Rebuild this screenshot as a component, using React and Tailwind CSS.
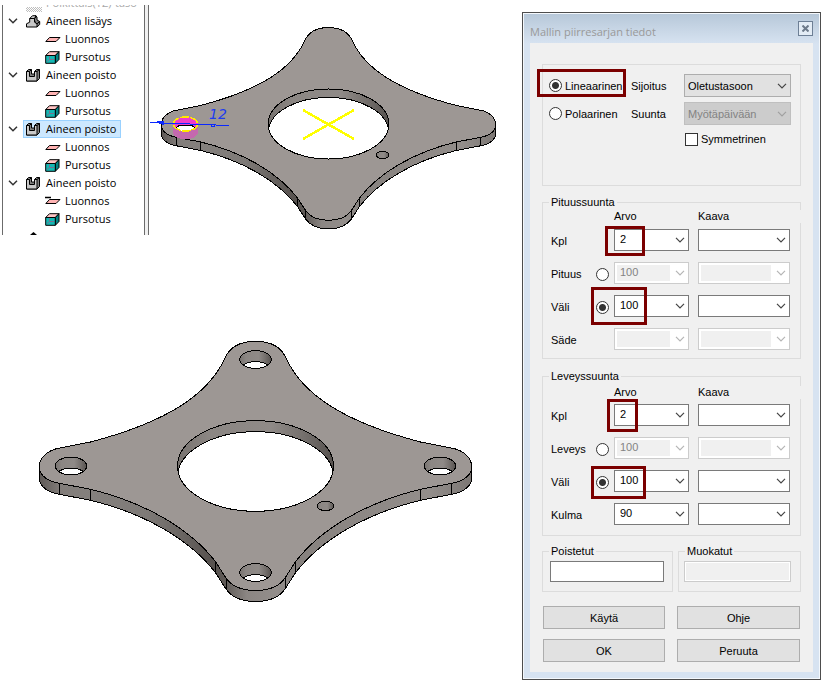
import React, { useState } from "react";

/* ---------- plate drawing ---------- */

// Left half of the upper outline, from the back lobe to the left tip.
const BACK_LEFT =
  "C-16 -124.7 -26 -119 -31 -107 C-47 -73 -85 -45 -165 -24 L-195.5 -18 C-208 -16 -216.3 -8 -216.3 1";
const BACK_RIGHT =
  "C216.3 -8 208 -16 195.5 -18 L165 -24 C85 -45 47 -73 31 -107 C26 -119 16 -124.7 0 -124.7";
const FRONT =
  "C-216.3 9 -208 15.5 -196 17.3 L-165 23.3 C-112 36 -66 62 -40 95.7 L-29.5 112 C-24 120 -16 124.5 0 124.5 C16 124.5 24 120 29.5 112 L40 95.7 C66 62 112 36 165 23.3 L196 17.3 C208 15.5 216.3 9 216.3 1";
const FRONT_LOWER =
  "L216.3 12 C216.3 20 208 26.5 196 28.3 L165 34.3 C112 47 66 73 40 106.7 L29.5 123 C24 131 16 135.5 0 135.5 C-16 135.5 -24 131 -29.5 123 L-40 106.7 C-66 73 -112 47 -165 34.3 L-196 28.3 C-208 26.5 -216.3 20 -216.3 12 Z";

const EDGES = [
  [196, 17.3],
  [165, 23.3],
  [40, 95.7],
  [29.5, 112],
];

function Hole({ id, cx, cy, rx, ry, depth = 11 }) {
  return (
    <g>
      <clipPath id={id}>
        <ellipse cx={cx} cy={cy} rx={rx} ry={ry} />
      </clipPath>
      <linearGradient id={`${id}-wall`}>
        <stop offset="0" stopColor="#77726f" />
        <stop offset="0.2" stopColor="#8b8683" />
        <stop offset="0.6" stopColor="#8f8a87" />
        <stop offset="0.8" stopColor="#76716e" />
        <stop offset="1" stopColor="#57524f" />
      </linearGradient>
      <ellipse cx={cx} cy={cy} rx={rx} ry={ry} fill={`url(#${id}-wall)`} />
      <g clipPath={`url(#${id})`}>
        <ellipse cx={cx} cy={cy + depth} rx={rx} ry={ry} fill="#fff" stroke="#000" vectorEffect="non-scaling-stroke" />
      </g>
      <ellipse cx={cx} cy={cy} rx={rx} ry={ry} fill="none" stroke="#000" vectorEffect="non-scaling-stroke" />
    </g>
  );
}

function Plate({ id, transform, holes }) {
  return (
    <g transform={transform} shapeRendering="crispEdges">
      <linearGradient id={`${id}-side`}>
        <stop offset="0" stopColor="#5d5855" />
        <stop offset="0.05" stopColor="#827d7a" />
        <stop offset="0.12" stopColor="#84807d" />
        <stop offset="0.25" stopColor="#7e7a77" />
        <stop offset="0.4" stopColor="#57524f" />
        <stop offset="0.43" stopColor="#5f5a57" />
        <stop offset="0.48" stopColor="#8b8683" />
        <stop offset="0.55" stopColor="#938e8b" />
        <stop offset="0.6" stopColor="#86817e" />
        <stop offset="0.9" stopColor="#938e8b" />
        <stop offset="1" stopColor="#7c7774" />
      </linearGradient>
      <path d={`M-216.3 1 ${FRONT} ${FRONT_LOWER}`} fill={`url(#${id}-side)`} stroke="#000" vectorEffect="non-scaling-stroke" />
      {EDGES.map(([x, y]) => (
        <path key={x} d={`M${-x} ${y} v11 M${x} ${y} v11`} stroke="#000" vectorEffect="non-scaling-stroke" />
      ))}
      <path d={`M0 -124.7 ${BACK_LEFT} ${FRONT} ${BACK_RIGHT} Z`} fill="#9d9794" stroke="#000" vectorEffect="non-scaling-stroke" />
      <Hole id={`${id}-bore`} cx={0} cy={0} rx={78} ry={45.3} />
      <Hole id={`${id}-pin`} cx={70} cy={40} rx={8.3} ry={4.7} />
      {holes.map(([x, y], i) => (
        <Hole key={i} id={`${id}-h${i}`} cx={x} cy={y} rx={15.7} ry={9} />
      ))}
    </g>
  );
}

function SelectedHolePlate() {
  return (
    <svg width="352" height="230" viewBox="150 5 352 230" role="img" aria-label="Levy, yksi reikä" className="shrink-0">
      <Plate id="p1" transform="translate(328.5 124) scale(0.7735)" holes={[]} />
      <g shapeRendering="crispEdges">
        <path d="M173 124 V132 A12.5 7.5 0 0 0 198 132 V124 Z" fill="#c468ae" />
        <ellipse cx="185.5" cy="124" rx="12.5" ry="7.5" fill="#f03ccc" />
        <ellipse cx="185.5" cy="128" rx="9" ry="3" fill="#fff" />
        <path d="M176.5 128 A9 3 0 0 1 194.5 128" fill="none" stroke="#000" />
        <ellipse cx="185.5" cy="124" rx="12" ry="7" fill="none" stroke="#ffe900" strokeWidth="1.5" strokeDasharray="9 1" />
        <path d="M150 122.5 L229 125.5" stroke="#0a28ff" strokeWidth="1" />
        <path d="M157 122 L163 121.5 L163 124.5 Z" fill="#0a28ff" stroke="#0a28ff" />
        <path d="M211 124.5 h3 v2 h-3z" fill="none" stroke="#0a28ff" />
        <path d="M303 110 L354 139 M303 139 L354 110" stroke="#ffff00" strokeWidth="2.5" />
      </g>
      <text x="209" y="119" fill="#1c3cf0" fontSize="14" fontStyle="italic" fontFamily="DejaVu Sans, sans-serif">
        12
      </text>
    </svg>
  );
}

function FinishedPlate() {
  return (
    <svg width="436" height="264" viewBox="38 340 436 264" role="img" aria-label="Levy, neljä reikää">
      <Plate
        id="p2"
        transform="translate(255.5 466)"
        holes={[
          [0, -106.5],
          [-184.5, 0],
          [184.5, 0],
          [0, 106.5],
        ]}
      />
    </svg>
  );
}

/* ---------- feature tree ---------- */

function AddIcon() {
  return (
    <svg width="15" height="13" viewBox="0 0 15 13" stroke="#000" strokeLinejoin="round">
      <path d="M7.5 2.5 L9.5 .7 L11 2 V5 L13.7 6.5 V9.5 L11 12 Z" fill="#808080" />
      <path d="M.5 12 V8.8 L3.7 7.2 V3.5 L6.5 .7 H10 L8.5 3.5 V7.2 L11 8.8 V12 Z" fill="#c8c8c8" />
      <path d="M3.7 3.5 H8.5 L11 1.2 M11 8.8 L13.7 6.5" fill="none" />
    </svg>
  );
}

function CutIcon() {
  return (
    <svg width="15" height="13" viewBox="0 0 15 13" stroke="#000" strokeLinejoin="round">
      <path d="M.5 2.5 L2.5 .5 H5.5 V5 L8.5 5 V2.5 L10.5 .5 H13.5 V9.5 L11 12 H.5 Z" fill="#808080" />
      <path d="M.5 12 V2.5 H3.5 V7.5 H8.5 V2.5 H11 V12 Z" fill="#c8c8c8" />
      <path d="M3.5 2.5 L5.5 .5 M11 2.5 L13.5 .5" fill="none" />
    </svg>
  );
}

function SketchIcon({ marked }) {
  return (
    <svg width="16" height="13" viewBox="0 0 16 13">
      <path d="M4.5 4.5 H15 L11 8.5 H.8 Z" fill="#ffb3b3" stroke="#000" />
      {marked && <path d="M0 2.5 h6" stroke="#000" strokeWidth="1.5" />}
    </svg>
  );
}

function ExtrudeIcon() {
  return (
    <svg width="16" height="13" viewBox="0 0 16 13" strokeLinejoin="round">
      <path d="M.7 4.5 L4.5 .7 H14 L10.3 4.5 Z" fill="#ffc4c4" stroke="#000" />
      <path d="M10.3 4.5 L14 .7 V8.5 L10.3 12.3 Z" fill="#008585" stroke="#000" />
      <path d="M.7 4.5 H10.3 V12.3 H.7 Z" fill="#14b8b4" stroke="#000" />
      <path d="M2 10.5 L4.5 8.5 H9 M4.5 5.5 V8" stroke="#7a6f8c" fill="none" />
    </svg>
  );
}

function Chevron({ className = "" }) {
  return (
    <svg width="10" height="6" viewBox="0 0 10 6" fill="none" stroke="currentColor" strokeWidth="1.2" className={className} aria-hidden="true">
      <path d="M1 .8 L5 4.8 L9 .8" />
    </svg>
  );
}

const FEATURES = [
  { name: "Aineen lisäys", icon: AddIcon },
  { name: "Aineen poisto", icon: CutIcon },
  { name: "Aineen poisto", icon: CutIcon, selected: true },
  { name: "Aineen poisto", icon: CutIcon, marked: true },
];

function FeatureTree() {
  return (
    <nav
      aria-label="Piirrepuu"
      className="ml-[2px] flex h-[230px] w-[147px] shrink-0 border-l border-r border-l-[#6b6b6b] border-r-[#6b6b6b] bg-[#f0f0f0] font-['Open_Sans',sans-serif] text-[11px] text-black"
    >
      <ul className="mr-[3px] flex flex-1 flex-col overflow-hidden border-r border-[#6b6b6b] bg-white whitespace-nowrap">
        <li className="flex h-[7px] shrink-0 items-end overflow-hidden pl-[23px]">
          <span className="mr-1 h-[5px] w-4 shrink-0 bg-[repeating-conic-gradient(#bdbdbd_0_25%,#fff_0_50%)] bg-[length:2px_2px]" />
          <span className="h-[18px] leading-[18px] text-[#a8a8a8]">Poikittais(YZ)-taso</span>
        </li>
        {FEATURES.map(({ name, icon: Icon, selected, marked }, i) => (
          <li key={i}>
            <div className="flex h-[18px] items-center pl-[5px]">
              <Chevron className="mr-[5px] text-[#333] [stroke-width:1.5]" />
              <span
                className={
                  selected
                    ? "flex h-[18px] items-center gap-[5px] border border-[#99d1ff] bg-[#cce8ff] pl-[2px] pr-1 leading-[16px]"
                    : "flex h-[18px] items-center gap-[5px] border border-transparent pl-[2px] pr-1 leading-[16px]"
                }
              >
                <Icon />
                {name}
              </span>
            </div>
            <ul className="pl-[42px]">
              <li className="flex h-[18px] items-center gap-1">
                <SketchIcon marked={marked} />
                Luonnos
              </li>
              <li className="flex h-[18px] items-center gap-1">
                <ExtrudeIcon />
                Pursotus
              </li>
            </ul>
          </li>
        ))}
        <li className="flex flex-1 items-end pl-[27px]">
          <svg width="7" height="3" viewBox="0 0 7 3">
            <path d="M0 3 L3.5 0 L7 3 Z" />
          </svg>
        </li>
      </ul>
    </nav>
  );
}

/* ---------- dialog ---------- */

function Mark({ className }) {
  return <span aria-hidden="true" className={`pointer-events-none absolute border-[3px] border-[#7b0000] ${className}`} />;
}

function Radio({ id, ...rest }) {
  return (
    <input
      type="radio"
      id={id}
      className="size-[13px] shrink-0 appearance-none rounded-full border border-[#333] bg-white checked:bg-[radial-gradient(circle,#333_0_3px,#fff_4px)]"
      {...rest}
    />
  );
}

function Combo({ id, label, value = "", disabled }) {
  return (
    <div className={disabled ? "flex h-[22px] min-w-0 border border-[#ccc] bg-white" : "flex h-[22px] min-w-0 border border-[#7a7a7a] bg-white"}>
      <input
        id={id}
        aria-label={label}
        defaultValue={value}
        disabled={disabled}
        className="my-[2px] ml-[2px] h-[16px] w-0 min-w-0 flex-1 px-[3px] pb-[2px] leading-[14px] outline-none disabled:bg-[#f0f0f0] disabled:text-[#838383]"
      />
      <button
        type="button"
        aria-label={`${label}: valitse`}
        disabled={disabled}
        className="flex w-[18px] shrink-0 items-center justify-end pr-[3px] text-[#444] disabled:text-[#b5b5b5]"
      >
        <Chevron />
      </button>
    </div>
  );
}

function Group({ title, className = "", children }) {
  return (
    <fieldset className={`min-w-0 border border-[#dcdcdc] ${className}`}>
      <legend className="ml-[6px] px-[2px] leading-[16px]">{title}</legend>
      {children}
    </fieldset>
  );
}

const GRID = "relative grid grid-cols-[45px_18px_75px_minmax(0,1fr)] items-center";

function DirectionGroup({ name, title, className, bodyClass, rows }) {
  const [mode, setMode] = useState("vali");
  return (
    <Group title={title} className={className}>
      <div className={`flex flex-col pl-2 pr-[10px] ${bodyClass}`}>
        <div className="grid grid-cols-[63px_75px_minmax(0,1fr)] leading-[13px]">
          <span className="col-start-2">Arvo</span>
          <span className="-mr-[11px] ml-[9px] bg-[#f0f0f0]">Kaava</span>
        </div>
        <div className="flex flex-col gap-[11px]">
          {rows.map((r) => (
            <div key={r.label} className={GRID}>
              <label htmlFor={`${name}-${r.label}`} className="pt-[2px]">
                {r.label}
              </label>
              <span className="flex pt-[2px]">
                {r.mode && (
                  <Radio
                    name={name}
                    aria-label={`${title}: ${r.label}`}
                    checked={mode === r.mode}
                    onChange={() => setMode(r.mode)}
                  />
                )}
              </span>
              <Combo id={`${name}-${r.label}`} label={`${r.label}, arvo`} value={r.value} disabled={r.disabled} />
              <div className="ml-[9px] min-w-0">
                <Combo label={`${r.label}, kaava`} disabled={r.disabled} />
              </div>
              {r.mark && <Mark className={r.mark} />}
            </div>
          ))}
        </div>
      </div>
    </Group>
  );
}

function Select({ id, disabled, children }) {
  return (
    <span className="relative flex">
      <select
        id={id}
        disabled={disabled}
        className="h-[23px] w-full appearance-none border border-[#adadad] bg-[#e1e1e1] pl-[3px] pr-5 text-black disabled:border-[#bfbfbf] disabled:bg-[#ccc] disabled:text-[#838383] disabled:opacity-100"
      >
        {children}
      </select>
      <Chevron
        className={
          disabled
            ? "pointer-events-none absolute right-[4px] top-[9px] text-[#a0a0a0]"
            : "pointer-events-none absolute right-[4px] top-[9px] text-[#444]"
        }
      />
    </span>
  );
}

function PushButton({ children }) {
  return (
    <button type="button" className="h-[23px] border border-[#adadad] bg-[#e1e1e1] text-center">
      {children}
    </button>
  );
}

function PatternDialog() {
  const [shape, setShape] = useState("lin");
  return (
    <section
      role="dialog"
      aria-label="Mallin piirresarjan tiedot"
      className="mr-px mt-3 w-[299px] shrink-0 border border-[#4d4d4d] bg-[#f4f8fc] p-px"
    >
      <div className="bg-[#d7e3f1] bg-[linear-gradient(#b7c8d9,#d7e3f1_30px)] px-[6px] pb-[6px]">
        <header className="flex h-[29px] items-center justify-between pt-1">
          <h1 className="pt-[3px] font-['Open_Sans',sans-serif] text-[11px] leading-[16px] text-[#999]">Mallin piirresarjan tiedot</h1>
          <button
            type="button"
            aria-label="Sulje"
            className="mb-[5px] flex size-[15px] items-center justify-center border border-[#6d7f95] bg-[#e3ecf5] text-[#6d7a8a]"
          >
            <svg width="7" height="7" viewBox="0 0 7 7" stroke="currentColor" strokeWidth="2">
              <path d="M.5 .5 L6.5 6.5 M6.5 .5 L.5 6.5" />
            </svg>
          </button>
        </header>

        <form
          onSubmit={(e) => e.preventDefault()}
          className="bg-[#f0f0f0] px-3 pb-[10px] pt-[21px] font-['Liberation_Sans',Arial,sans-serif] text-[11px] leading-[14px] text-black"
        >
          <div className="relative h-[122px] border border-[#dcdcdc] pl-[6px] pr-[9px] pt-[9px]">
            <div className="grid grid-cols-[82px_53px_minmax(0,1fr)] items-center gap-y-[5px]">
              <label className="flex items-center gap-[3px]">
                <Radio name="muoto" checked={shape === "lin"} onChange={() => setShape("lin")} />
                Lineaarinen
              </label>
              <label htmlFor="sijoitus">Sijoitus</label>
              <Select id="sijoitus">
                <option>Oletustasoon</option>
              </Select>
              <label className="flex items-center gap-[3px]">
                <Radio name="muoto" checked={shape === "pol"} onChange={() => setShape("pol")} />
                Polaarinen
              </label>
              <label htmlFor="suunta">Suunta</label>
              <Select id="suunta" disabled>
                <option>Myötäpäivään</option>
              </Select>
              <label className="col-start-3 flex items-center gap-[3px] pl-px pt-[2px]">
                <input type="checkbox" className="size-[13px] appearance-none border border-[#333] bg-white checked:bg-[#333]" />
                Symmetrinen
              </label>
            </div>
            <Mark className="-left-[6px] top-1 h-[28px] w-[89px]" />
          </div>

          <DirectionGroup
            name="pituus"
            title="Pituussuunta"
            className="mt-2"
            bodyClass="gap-[6px] pb-2"
            rows={[
              { label: "Kpl", value: "2", mark: "-top-[3px] left-[54px] h-[30px] w-[40px]" },
              { label: "Pituus", value: "100", mode: "koko", disabled: true },
              { label: "Väli", value: "100", mode: "vali", mark: "-top-2 left-[40px] h-[38px] w-[56px]" },
              { label: "Säde", disabled: true },
            ]}
          />
          <DirectionGroup
            name="leveys"
            title="Leveyssuunta"
            className="mt-[9px]"
            bodyClass="gap-[5px] pt-[2px] pb-[10px]"
            rows={[
              { label: "Kpl", value: "2", mark: "-top-[5px] left-[56px] h-[33px] w-[31px]" },
              { label: "Leveys", value: "100", mode: "koko", disabled: true },
              { label: "Väli", value: "100", mode: "vali", mark: "-top-1 left-[40px] h-[33px] w-[55px]" },
              { label: "Kulma", value: "90" },
            ]}
          />

          <div className="mt-[7px] grid grid-cols-[131fr_123fr] gap-[5px]">
            <Group title="Poistetut" className="pb-[9px]">
              <div className="flex pl-[7px] pr-2 pt-[2px]">
                <input aria-label="Poistetut" className="h-[21px] w-full min-w-0 border border-[#7a7a7a] bg-white px-1" />
              </div>
            </Group>
            <Group title="Muokatut" className="pb-[9px]">
              <div className="flex pl-[5px] pr-[9px] pt-[2px]">
                <input
                  aria-label="Muokatut"
                  disabled
                  className="h-[21px] w-full min-w-0 border border-[#ccc] bg-[#f0f0f0] px-1 shadow-[inset_0_0_0_1px_#fff]"
                />
              </div>
            </Group>
          </div>

          <div className="mx-px mt-[14px] grid grid-cols-[122fr_123fr] gap-x-3 gap-y-[10px]">
            <PushButton>Käytä</PushButton>
            <PushButton>Ohje</PushButton>
            <PushButton>OK</PushButton>
            <PushButton>Peruuta</PushButton>
          </div>
        </form>
      </div>
    </section>
  );
}

export default function App() {
  return (
    <main className="flex min-h-screen items-start bg-white">
      <div className="flex min-w-0 flex-1 flex-col pt-[5px]">
        <div className="flex gap-px">
          <FeatureTree />
          <SelectedHolePlate />
        </div>
        <div className="mt-[105px] pl-[38px]">
          <FinishedPlate />
        </div>
      </div>
      <PatternDialog />
    </main>
  );
}
